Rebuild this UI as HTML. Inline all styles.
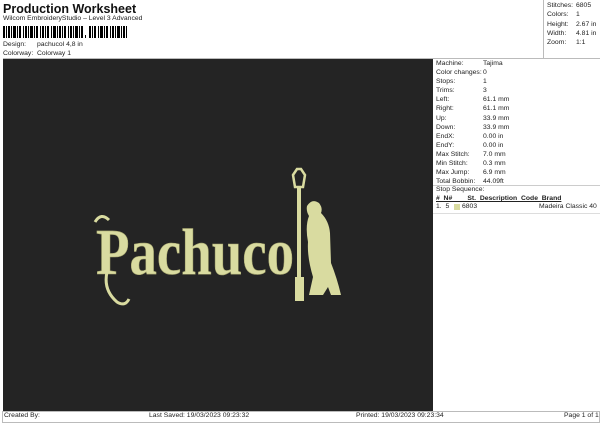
<!DOCTYPE html><html><head><style>
body{margin:0;width:600px;height:424px;background:#fff;position:relative;overflow:hidden;font-family:"Liberation Sans",sans-serif;color:#222}
.a{position:absolute;white-space:nowrap}
.s{font-size:6.8px}
</style></head><body>
<div class="a" style="left:3px;top:2px;font-size:12.5px;font-weight:bold;color:#111">Production Worksheet</div>
<div class="a s" style="left:3px;top:15px">Wilcom EmbroideryStudio – Level 3 Advanced</div>
<svg class="a" style="left:3px;top:26px" width="130" height="12">
<g fill="#000">
<rect x="0" y="0" width="2" height="12"/><rect x="3" y="0" width="1" height="12"/><rect x="5" y="0" width="2" height="12"/><rect x="8" y="0" width="1" height="12"/><rect x="10" y="0" width="3" height="12"/><rect x="14" y="0" width="1" height="12"/><rect x="16" y="0" width="2" height="12"/><rect x="20" y="0" width="1" height="12"/><rect x="22" y="0" width="2" height="12"/><rect x="25" y="0" width="1" height="12"/><rect x="27" y="0" width="3" height="12"/><rect x="31" y="0" width="1" height="12"/><rect x="33" y="0" width="2" height="12"/><rect x="37" y="0" width="1" height="12"/><rect x="39" y="0" width="2" height="12"/><rect x="42" y="0" width="1" height="12"/><rect x="44" y="0" width="2" height="12"/><rect x="48" y="0" width="1" height="12"/><rect x="50" y="0" width="3" height="12"/><rect x="54" y="0" width="1" height="12"/><rect x="56" y="0" width="2" height="12"/><rect x="59" y="0" width="1" height="12"/><rect x="61" y="0" width="2" height="12"/><rect x="65" y="0" width="1" height="12"/><rect x="67" y="0" width="2" height="12"/><rect x="70" y="0" width="1" height="12"/><rect x="72" y="0" width="3" height="12"/><rect x="76" y="0" width="1" height="12"/><rect x="78" y="0" width="2" height="12"/><rect x="82" y="9" width="1" height="3"/><rect x="86" y="0" width="2" height="12"/><rect x="89" y="0" width="1" height="12"/><rect x="91" y="0" width="2" height="12"/><rect x="95" y="0" width="1" height="12"/><rect x="97" y="0" width="3" height="12"/><rect x="101" y="0" width="1" height="12"/><rect x="103" y="0" width="2" height="12"/><rect x="107" y="0" width="1" height="12"/><rect x="109" y="0" width="2" height="12"/><rect x="112" y="0" width="1" height="12"/><rect x="114" y="0" width="3" height="12"/><rect x="118" y="0" width="1" height="12"/><rect x="120" y="0" width="2" height="12"/><rect x="123" y="0" width="1" height="12"/>
</g></svg>
<div class="a s" style="left:3px;top:41px">Design:</div><div class="a s" style="left:37px;top:41px">pachucol 4,8 in</div>
<div class="a s" style="left:3px;top:50px">Colorway:</div><div class="a s" style="left:37px;top:50px">Colorway 1</div>
<div class="a" style="left:543px;top:0;width:1px;height:58px;background:#bbb"></div>
<div class="a" style="left:3px;top:58px;width:597px;height:1px;background:#bbb"></div>
<div class="a s" style="left:547px;top:1px;line-height:9.3px">Stitches:<br>Colors:<br>Height:<br>Width:<br>Zoom:</div>
<div class="a s" style="left:576px;top:1px;line-height:9.3px">6805<br>1<br>2.67 in<br>4.81 in<br>1:1</div>
<div class="a" style="left:3px;top:59px;width:430px;height:352px;background:#242424"></div>
<svg class="a" style="left:3px;top:59px" width="430" height="352">
<text x="93" y="215" font-family="Liberation Serif,serif" font-weight="bold" font-size="66" fill="#d9dba0" stroke="#a8a870" stroke-width=".6" textLength="198" lengthAdjust="spacingAndGlyphs">Pachuco</text>
<path d="M104 213 q-4 18 10 30 q8 5 12 -3" stroke="#d9dba0" stroke-width="3" fill="none"/>
<path d="M92 163 q6-10 14-2" stroke="#d9dba0" stroke-width="3" fill="none"/>
<rect x="294" y="128" width="4" height="105" fill="#d9dba0"/>
<path d="M290 116 l4 -6 l4 0 l4 6 l-2 12 l-8 0z" fill="none" stroke="#d9dba0" stroke-width="2.5"/>
<rect x="292" y="218" width="9" height="24" fill="#d9dba0"/>
<path d="M304 147 q5-8 12-3 q4 5 2 10 q8 8 9 20 l1 30 q6 15 10 32 l-10 0 l-3-8 l-5 8 l-14 0 l4-18 q-6-20-5-35 q-3-16 1-26 q-3-5 -2-10z" fill="#d9dba0"/>
</svg>
<div class="a s" style="left:436px;top:59px;line-height:9.1px">Machine:<br>Color changes:<br>Stops:<br>Trims:<br>Left:<br>Right:<br>Up:<br>Down:<br>EndX:<br>EndY:<br>Max Stitch:<br>Min Stitch:<br>Max Jump:<br>Total Bobbin:</div>
<div class="a s" style="left:483px;top:59px;line-height:9.1px">Tajima<br>0<br>1<br>3<br>61.1 mm<br>61.1 mm<br>33.9 mm<br>33.9 mm<br>0.00 in<br>0.00 in<br>7.0 mm<br>0.3 mm<br>6.9 mm<br>44.09ft</div>
<div class="a" style="left:433px;top:185px;width:167px;height:1px;background:#ccc"></div>
<div class="a s" style="left:436px;top:186px">Stop Sequence:</div>
<div class="a s" style="left:436px;top:195px;font-weight:bold;text-decoration:underline">#&nbsp; N#&nbsp;&nbsp;&nbsp;&nbsp;&nbsp;&nbsp;&nbsp; St.&nbsp; Description&nbsp; Code&nbsp; Brand</div>
<div class="a s" style="left:436px;top:203px">1.&nbsp; 5</div>
<div class="a" style="left:454px;top:204px;width:6px;height:6px;background:#d9dba0"></div>
<div class="a s" style="left:462px;top:203px">6803</div>
<div class="a s" style="left:539px;top:203px">Madeira Classic 40</div>
<div class="a" style="left:433px;top:213px;width:167px;height:1px;background:#ddd"></div>
<div class="a" style="left:2px;top:411px;width:596px;height:10px;border:1px solid #bbb"></div>
<div class="a s" style="left:4px;top:412px">Created By:</div>
<div class="a s" style="left:149px;top:412px">Last Saved: 19/03/2023 09:23:32</div>
<div class="a s" style="left:356px;top:412px">Printed: 19/03/2023 09:23:34</div>
<div class="a s" style="left:564px;top:412px">Page 1 of 1</div>
</body></html>
